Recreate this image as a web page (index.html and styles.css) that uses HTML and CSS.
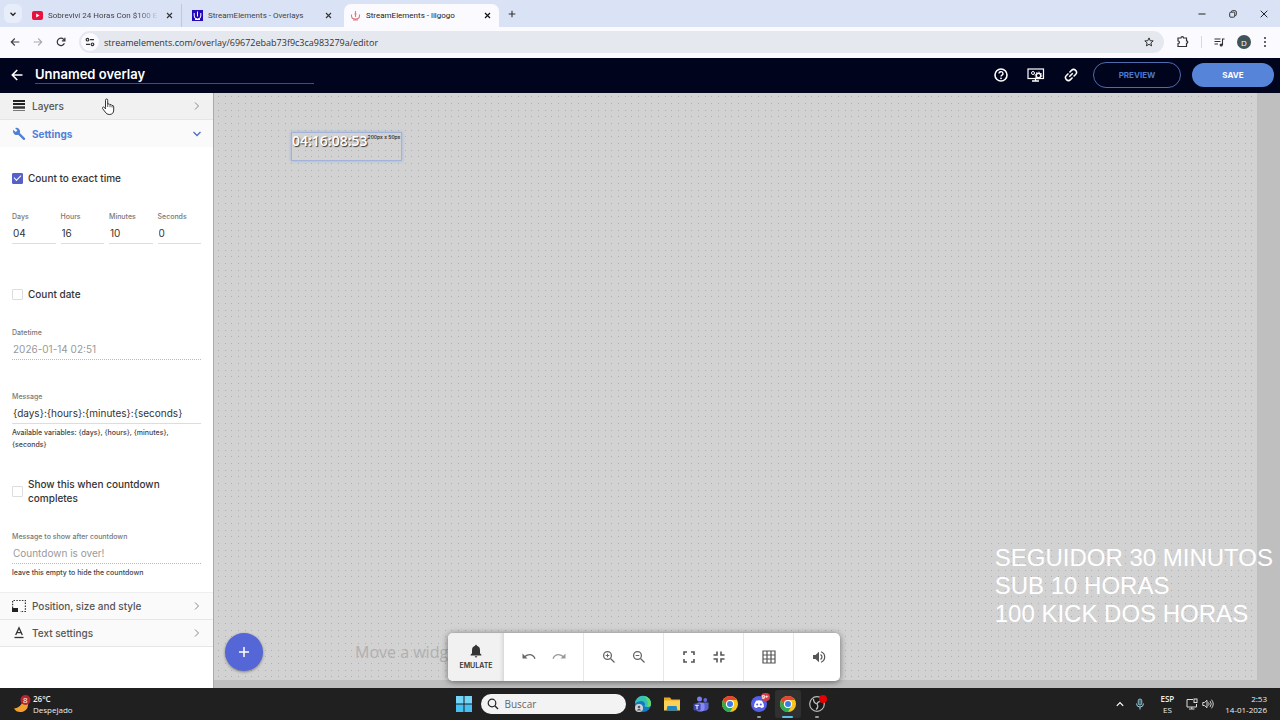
FILE: index.html
```html
<!DOCTYPE html>
<html lang="es">

<head>
	<meta charset="utf-8">
	<title>StreamElements - lilgogo</title>
	<link rel="stylesheet" href="styles.css">
</head>

<body>
	<!-- browser tabs -->
	<div class="tabs">
		<button class="tab-search" aria-label="Search tabs"><svg width="8" height="8" viewBox="0 0 8 8"><path d="M1.500 2.800 4 5.300 6.500 2.800" fill="none" stroke="#222" stroke-width="1.300"/></svg></button>
		<div class="tab">
			<svg width="11" height="11" viewBox="0 0 11 11"><rect y="1" width="11" height="9" rx="2" fill="#e8103c"/><path d="M4.200 3.500v4l3.400-2z" fill="#fff"/></svg>
			<span class="tab-title faded">Sobreviví 24 Horas Con $100 E</span>
			<button class="close" aria-label="Close tab"><svg width="7" height="7" viewBox="0 0 7 7"><path d="M1 1l5 5M6 1 1 6" stroke="#333" stroke-width="1.100"/></svg></button>
		</div>
		<div class="tab divided">
			<svg width="11" height="11" viewBox="0 0 11 11"><rect width="11" height="11" fill="#2409b8"/><path d="M2.200 3v3a3.300 3 0 0 0 6.600 0V3M5.500 1.500v5M3 9.500h5" fill="none" stroke="#fff"/></svg>
			<span class="tab-title">StreamElements - Overlays</span>
			<button class="close" aria-label="Close tab"><svg width="7" height="7" viewBox="0 0 7 7"><path d="M1 1l5 5M6 1 1 6" stroke="#333" stroke-width="1.100"/></svg></button>
		</div>
		<div class="tab active">
			<svg width="11" height="11" viewBox="0 0 11 11"><path d="M1.500 4.500v1.500a4 3 0 0 0 8 0V4.500M5.500 1v6M3 10h5" fill="none" stroke="#e5777d" stroke-width="1.100"/><circle cx="5.500" cy="4" r="1" fill="#e5777d"/></svg>
			<span class="tab-title">StreamElements - lilgogo</span>
			<button class="close" aria-label="Close tab"><svg width="7" height="7" viewBox="0 0 7 7"><path d="M1 1l5 5M6 1 1 6" stroke="#111" stroke-width="1.200"/></svg></button>
		</div>
		<button class="new-tab" aria-label="New tab"><svg width="8" height="8" viewBox="0 0 8 8"><path d="M4 .700v6.600M.700 4h6.600" stroke="#333" stroke-width="1.100"/></svg></button>
		<div class="window-buttons">
			<button aria-label="Minimize"><svg width="8" height="8" viewBox="0 0 8 8"><path d="M.500 4h7" stroke="#222"/></svg></button>
			<button aria-label="Restore"><svg width="8" height="8" viewBox="0 0 8 8"><g fill="none" stroke="#222" stroke-width=".900"><rect x=".700" y="2.200" width="5" height="5" rx="1"/><path d="M2.500 2V1.500A.800.800 0 0 1 3.300.700h2.700A1.300 1.300 0 0 1 7.300 2v2.700a.800.800 0 0 1-.800.800H6"/></g></svg></button>
			<button aria-label="Close"><svg width="8" height="8" viewBox="0 0 8 8"><path d="M.700.700l6.600 6.600M7.300.700.700 7.300" stroke="#222"/></svg></button>
		</div>
	</div>

	<!-- address bar -->
	<div class="toolbar">
		<button aria-label="Back"><svg width="10" height="10" viewBox="0 0 10 10"><path d="M9.300 5H1.300M4.800 1.500 1.300 5l3.500 3.500" fill="none" stroke="#444" stroke-width="1.200"/></svg></button>
		<button aria-label="Forward"><svg width="10" height="10" viewBox="0 0 10 10"><path d="M.700 5h8M5.200 1.500 8.700 5 5.200 8.500" fill="none" stroke="#aaa" stroke-width="1.100"/></svg></button>
		<button aria-label="Reload"><svg width="10" height="10" viewBox="0 0 10 10"><path d="M8.400 6.200A3.700 3.700 0 1 1 7.700 2.400L8.800 3.500M8.900.800v3H5.900" fill="none" stroke="#333" stroke-width="1.200"/></svg></button>
		<div class="address">
			<button class="site-info" aria-label="Site information"><svg width="10" height="10" viewBox="0 0 10 10"><g fill="none" stroke="#333" stroke-width="1.200"><circle cx="2.500" cy="2.700" r="1.300"/><path d="M5 2.700h4M1 7.300h4"/><circle cx="7.500" cy="7.300" r="1.300"/></g></svg></button>
			<input type="text" aria-label="Address" value="streamelements.com/overlay/69672ebab73f9c3ca983279a/editor">
			<button aria-label="Bookmark"><svg width="10" height="10" viewBox="0 0 10 10"><path d="M5 .900 6.200 3.700l3 .200-2.300 2 .700 3L5 7.300 2.400 8.900l.700-3L.800 3.900l3-.200z" fill="none" stroke="#333"/></svg></button>
		</div>
		<div class="extensions">
			<button aria-label="Extensions"><svg width="12" height="12" viewBox="0 0 12 12"><path d="M1 2h3a1.300 1.300 0 0 1 2.600 0H9.500v2.800a1.300 1.300 0 0 1 0 2.600V10.500H1V7.700q1.500-.300 1.500-1.500T1 4.800z" fill="none" stroke="#333" stroke-width="1.200"/></svg></button>
			<span class="bar"></span>
			<button aria-label="Media"><svg width="11" height="11" viewBox="0 0 11 11"><path d="M.500 2h6M.500 4.500h6M.500 7H4M8.500 8V2H10.500" fill="none" stroke="#333" stroke-width="1.100"/><circle cx="7.200" cy="8" r="1.600" fill="#333"/></svg></button>
			<button class="avatar">D</button>
			<button aria-label="Menu"><svg width="4" height="12" viewBox="0 0 4 12"><g fill="#333"><circle cx="2" cy="2" r="1"/><circle cx="2" cy="6" r="1"/><circle cx="2" cy="10" r="1"/></g></svg></button>
		</div>
	</div>

	<!-- editor header -->
	<header class="header">
		<a href="#" aria-label="Back"><svg width="12" height="12" viewBox="0 0 12 12"><path d="M11.500 6H1.500M6.200 1 1.300 6l4.900 5" fill="none" stroke="#fff" stroke-width="1.600"/></svg></a>
		<input class="overlay-name" type="text" aria-label="Overlay name" value="Unnamed overlay">
		<div class="header-actions">
			<button aria-label="Help"><svg width="14" height="14" viewBox="0 0 14 14"><circle cx="7" cy="7" r="6" fill="none" stroke="#fff" stroke-width="1.600"/><path d="M5 5.600a2 1.900 0 1 1 3 1.600Q7 7.800 7 8.600" fill="none" stroke="#fff" stroke-width="1.400"/><circle cx="7" cy="10.300" r=".900" fill="#fff"/></svg></button>
			<button aria-label="Overlay settings"><svg width="18" height="14" viewBox="0 0 18 14"><rect x="1" y="1" width="15.500" height="9.500" fill="none" stroke="#fff" stroke-width="1.200"/><path d="M5 13h7M8.500 11v2" stroke="#fff" stroke-width="1.300"/><circle cx="6" cy="5" r="1.500" fill="none" stroke="#fff"/><circle cx="11.500" cy="7.500" r="2.300" fill="none" stroke="#fff" stroke-width="1.500"/><circle cx="11.500" cy="7.500" r="3.400" fill="none" stroke="#fff" stroke-dasharray="1.300 1.300"/></svg></button>
			<button aria-label="Copy link"><svg width="14" height="14" viewBox="0 0 14 14"><g fill="none" stroke="#fff" stroke-width="1.500" transform="rotate(-45 7 7)"><path d="M6.300 9.900H3.400a2.900 2.900 0 0 1 0-5.800H6.300M7.700 4.100h2.900a2.900 2.900 0 0 1 0 5.800H7.700M4.500 7h5"/></g></svg></button>
			<button class="pill preview">PREVIEW</button>
			<button class="pill save">SAVE</button>
		</div>
	</header>

	<main class="editor">
		<aside class="sidebar">
			<button class="section hover">
				<svg width="14" height="14" viewBox="0 0 14 14"><path d="M1 2h12M1 5h12" stroke="#222" stroke-width="2"/><path d="M1 8.500h12" stroke="#333" stroke-width="2.500"/><path d="M1 11.500h12" stroke="#777"/></svg>
				<span>Layers</span>
				<svg class="chevron" width="8" height="8" viewBox="0 0 8 8"><path d="M2 .500 5.500 4 2 7.500" fill="none" stroke="#888"/></svg>
			</button>
			<button class="section open">
				<svg width="14" height="14" viewBox="0 0 14 14"><path d="M12.900 11.100 7.900 6.100A3.900 3.900 0 0 0 3 1L5.400 3.400 3.700 5.100 1.200 2.800A3.900 3.900 0 0 0 6.200 7.800L11.200 12.800Q12 13.500 13 12.500 13.500 11.800 12.900 11.100z" fill="#5180d8"/></svg>
				<span>Settings</span>
				<svg class="chevron" width="8" height="8" viewBox="0 0 8 8"><path d="M.500 2 4 5.500 7.500 2" fill="none" stroke="#4a6fc8" stroke-width="1.300"/></svg>
			</button>
			<form class="settings">
				<label class="check"><input type="checkbox" checked><span>Count to exact time</span></label>
				<div class="time-row">
					<div class="field">
						<label for="days">Days</label>
						<input type="text" id="days" value="04">
					</div>
					<div class="field">
						<label for="hours">Hours</label>
						<input type="text" id="hours" value="16">
					</div>
					<div class="field">
						<label for="minutes">Minutes</label>
						<input type="text" id="minutes" value="10">
					</div>
					<div class="field">
						<label for="seconds">Seconds</label>
						<input type="text" id="seconds" value="0">
					</div>
				</div>
				<label class="check"><input type="checkbox"><span>Count date</span></label>
				<div class="field">
					<label for="datetime">Datetime</label>
					<input type="text" id="datetime" value="2026-01-14 02:51" disabled>
				</div>
				<div class="field with-help">
					<label for="message">Message</label>
					<input type="text" id="message" value="{days}:{hours}:{minutes}:{seconds}">
					<p>Available variables: {days}, {hours}, {minutes}, {seconds}</p>
				</div>
				<label class="check"><input type="checkbox"><span>Show this when countdown completes</span></label>
				<div class="field">
					<label for="after">Message to show after countdown</label>
					<input type="text" id="after" value="Countdown is over!" disabled>
					<p>leave this empty to hide the countdown</p>
				</div>
			</form>
			<button class="section">
				<svg width="14" height="14" viewBox="0 0 14 14"><path d="M.600 9V1.500H13.400V12.500H8" fill="none" stroke="#333" stroke-width="1.200" stroke-dasharray="1.500 1.300"/><rect y="9" width="6" height="4" fill="#222"/></svg>
				<span>Position, size and style</span>
				<svg class="chevron" width="8" height="8" viewBox="0 0 8 8"><path d="M2 .500 5.500 4 2 7.500" fill="none" stroke="#888"/></svg>
			</button>
			<button class="section">
				<svg width="14" height="14" viewBox="0 0 14 14"><path d="M3.700 9 7 1.800 10.300 9M4.800 6.700h4.400" fill="none" stroke="#333" stroke-width="1.300"/><path d="M2.500 11.500h9" stroke="#333" stroke-width="1.300"/></svg>
				<span>Text settings</span>
				<svg class="chevron" width="8" height="8" viewBox="0 0 8 8"><path d="M2 .500 5.500 4 2 7.500" fill="none" stroke="#888"/></svg>
			</button>
		</aside>

		<section class="stage">
			<svg class="dots" width="100%" height="100%" aria-hidden="true">
				<defs>
					<pattern id="grid" width="20" height="20" patternUnits="userSpaceOnUse">
						<path d="M4 3.500h1M11 3.500h1M17 3.500h1M4 10.500h1M11 10.500h1M17 10.500h1M4 17.500h1M11 17.500h1M17 17.500h1" stroke="#aeaeb1"/>
					</pattern>
				</defs>
				<rect width="100%" height="100%" fill="url(#grid)"/>
			</svg>
			<div class="widget"><span class="count">04:16:08:53</span><span class="size">200px x 50px</span></div>
			<p class="hint">Move a widget</p>
			<p class="goals">SEGUIDOR 30 MINUTOS<br>SUB 10 HORAS<br>100 KICK DOS HORAS</p>
			<button class="add" aria-label="Add widget"><svg width="12" height="12" viewBox="0 0 12 12"><path d="M6 1v10M1 6h10" stroke="#fff" stroke-width="1.500"/></svg></button>
			<div class="controls">
				<button class="emulate">
					<svg width="14" height="14" viewBox="0 0 14 14"><path d="M7 .800q.900 0 .900 1Q11 2.800 11 6.200V9.300l1.400 1.500v.700H1.600v-.700L3 9.300V6.200Q3 2.800 6.100 1.800 6.100.800 7 .800zM5.700 12.200h2.600Q8 13.600 7 13.600T5.700 12.200z" fill="#333"/></svg>
					<span>EMULATE</span>
				</button>
				<div class="group">
					<button aria-label="Undo"><svg width="14" height="14" viewBox="0 0 14 14"><path d="M.500 3.500v5h5L3.700 6.700Q5.500 5.200 7.500 5.200 11 5.200 12.300 8.900L13.600 8.400Q12 3.900 7.500 3.900 4.900 3.900 2.700 5.700z" fill="#666"/></svg></button>
					<button aria-label="Redo"><svg width="14" height="14" viewBox="0 0 14 14"><path d="M13.500 3.500v5h-5l1.800-1.800Q8.500 5.200 6.500 5.200 3 5.200 1.700 8.900L.400 8.400Q2 3.900 6.500 3.900q2.600 0 4.800 1.800z" fill="#999"/></svg></button>
				</div>
				<div class="group">
					<button aria-label="Zoom in"><svg width="14" height="14" viewBox="0 0 14 14"><g fill="none" stroke="#666" stroke-width="1.300"><circle cx="5.500" cy="5.500" r="3.900"/><path d="M8.500 8.500l4 4"/><path d="M5.500 3.700v3.600M3.700 5.500h3.600" stroke-width="1"/></g></svg></button>
					<button aria-label="Zoom out"><svg width="14" height="14" viewBox="0 0 14 14"><g fill="none" stroke="#666" stroke-width="1.300"><circle cx="5.500" cy="5.500" r="3.900"/><path d="M8.500 8.500l4 4"/><path d="M3.700 5.500h3.600" stroke-width="1"/></g></svg></button>
				</div>
				<div class="group">
					<button aria-label="Fullscreen"><svg width="14" height="14" viewBox="0 0 14 14"><path d="M2 5V2h3M9 2h3v3M12 9v3H9M5 12H2V9" fill="none" stroke="#555" stroke-width="1.600"/></svg></button>
					<button aria-label="Exit fullscreen"><svg width="14" height="14" viewBox="0 0 14 14"><path d="M5 1.500V5H1.500M9 1.500V5h3.500M12.500 9H9v3.500M5 12.500V9H1.500" fill="none" stroke="#555" stroke-width="1.600"/></svg></button>
				</div>
				<div class="group">
					<button aria-label="Grid"><svg width="14" height="14" viewBox="0 0 14 14"><path d="M1 1h12v12H1zM5 1v12M9 1v12M1 5h12M1 9h12" fill="none" stroke="#555" stroke-width="1.200"/></svg></button>
				</div>
				<div class="group">
					<button aria-label="Sound"><svg width="14" height="14" viewBox="0 0 14 14"><path d="M1 5h2.500L7 1.800v10.400L3.500 9H1z" fill="#555"/><path d="M8.500 4.500Q10 5.500 10 7T8.500 9.500M9 1.800Q12.700 3.200 12.700 7T9 12.200" fill="none" stroke="#555" stroke-width="1.200"/></svg></button>
				</div>
			</div>
		</section>
	</main>

	<footer class="taskbar">
		<div class="weather">
			<svg width="18" height="20" viewBox="0 0 18 20"><path d="M1 14.500Q8 14 10 6l5 2q1 7-4.500 9.500Q4 19.500 1 14.500z" fill="#f2a032"/><circle cx="12.500" cy="6" r="5" fill="#b7262c"/><text x="10" y="9" class="badge-text">8</text></svg>
			<div><b>26°C</b><br>Despejado</div>
		</div>
		<div class="apps">
			<button aria-label="Start"><svg width="16" height="16" viewBox="0 0 16 16"><g fill="#45c0f2"><path d="M0 0h7.500v7.500H0zM8.500 0H16v7.500H8.500z" fill="#74d5f8"/><path d="M0 8.500h7.500V16H0zM8.500 8.500H16V16H8.500z"/></g></svg></button>
			<label class="search">
				<svg width="12" height="12" viewBox="0 0 12 12"><circle cx="5" cy="5" r="3.800" fill="none" stroke="#222" stroke-width="1.200"/><path d="M7.800 7.800l3.200 3.200" stroke="#222" stroke-width="1.300"/></svg>
				<input type="text" placeholder="Buscar" aria-label="Buscar">
			</label>
			<button aria-label="Edge"><svg width="18" height="18" viewBox="0 0 18 18"><circle cx="9" cy="9" r="8" fill="#1479c4"/><path d="M1 8.500A8 8 0 0 1 17 9q0 3-3.500 3-3 0-3-1.500.5-.5.5-1.500Q10.500 6 7 6 3 6 1 8.500z" fill="#36c3b4"/><path d="M10 1q7 1.500 7 8 0 3-3.500 3Q15 5 10 1z" fill="#67d868"/><circle cx="5" cy="13" r="4" fill="#cfd3d4"/><circle cx="5" cy="12" r="1.300" fill="#555"/><path d="M2.700 15.500q2.300-3.500 4.600 0" fill="#555"/></svg></button>
			<button aria-label="Files"><svg width="18" height="18" viewBox="0 0 18 18"><path d="M1 2.500h6l1.500 2H17V15H1z" fill="#e9a923"/><path d="M1 5.500h16v10H1z" fill="#fbd058"/><path d="M4.500 11h9l1 4.500h-11z" fill="#1d86c8"/></svg></button>
			<button aria-label="Teams"><svg width="18" height="18" viewBox="0 0 18 18"><circle cx="7.500" cy="4" r="2.500" fill="#7a80eb"/><circle cx="13.300" cy="5" r="1.900" fill="#626adb"/><path d="M11 7.500h5.500v5.500q-1 3-4.500 3z" fill="#5c60d1"/><rect x="4" y="7.500" width="8.500" height="9" rx="3" fill="#858af2"/><rect x="1.500" y="8.500" width="7" height="7" rx="1" fill="#4145ae"/><path d="M3.200 10.300h3.600M5 10.300v4" stroke="#fff"/></svg></button>
			<button aria-label="Chrome"><svg width="18" height="18" viewBox="0 0 18 18"><circle cx="9" cy="9" r="8" fill="#fbc31d"/><path d="M2.100 5A8 8 0 0 1 15.900 5H9A4 4 0 0 0 5.500 11z" fill="#e54335"/><path d="M2.100 5A8 8 0 0 0 9 17l3.500-6A4 4 0 0 1 5.500 11z" fill="#31a852"/><circle cx="9" cy="9" r="4" fill="#fff"/><circle cx="9" cy="9" r="3" fill="#3a7de8"/></svg></button>
			<button class="running" aria-label="Discord"><svg width="18" height="18" viewBox="0 0 18 18"><circle cx="9" cy="9" r="8" fill="#555fe6"/><path d="M6 5.800Q9 4.800 12 5.800q2 3 2 6-1.500 1.300-3 1.300l-.700-1.200H7.700L7 13.100q-1.500 0-3-1.300 0-3 2-6z" fill="#fff"/><circle cx="7.200" cy="9.500" r="1" fill="#555fe6"/><circle cx="10.800" cy="9.500" r="1" fill="#555fe6"/></svg><span class="badge">9+</span></button>
			<button class="running current" aria-label="Chrome"><svg width="18" height="18" viewBox="0 0 18 18"><circle cx="9" cy="9" r="8" fill="#fbc31d"/><path d="M2.100 5A8 8 0 0 1 15.900 5H9A4 4 0 0 0 5.500 11z" fill="#e54335"/><path d="M2.100 5A8 8 0 0 0 9 17l3.500-6A4 4 0 0 1 5.500 11z" fill="#31a852"/><circle cx="9" cy="9" r="4" fill="#fff"/><circle cx="9" cy="9" r="3" fill="#3a7de8"/></svg></button>
			<button class="running" aria-label="OBS"><svg width="18" height="18" viewBox="0 0 18 18" overflow="visible"><circle cx="9" cy="9" r="7.300" fill="#181818" stroke="#bbb" stroke-width="1.200"/><g fill="none" stroke="#bbb" stroke-width="1.300"><path d="M5.500 4q0 4 3.500 5M13.800 6.500q-4-.500-4.800 2.500M8 14.500q3-2.500 1-5.500"/></g><circle cx="15" cy="4" r="4" fill="#e40000"/></svg></button>
		</div>
		<div class="tray">
			<button aria-label="Hidden icons"><svg width="8" height="8" viewBox="0 0 8 8"><path d="M.800 5.800 4 2.500l3.200 3.300" fill="none" stroke="#fff" stroke-width="1.200"/></svg></button>
			<svg width="10" height="12" viewBox="0 0 10 12"><rect x="3.200" y="1" width="3.600" height="6" rx="1.800" fill="#3f6b78" stroke="#9fd3dd" stroke-width=".800"/><path d="M1.500 5.500a3.500 3.500 0 0 0 7 0M5 9v2.500" fill="none" stroke="#9fd3dd"/></svg>
			<div class="lang"><b>ESP</b><br>ES</div>
			<div class="system">
				<svg width="12" height="12" viewBox="0 0 12 12"><path d="M7 1.500H1v7.500h9.500V6M3 11h5.500M5.800 9v2" fill="none" stroke="#ddd"/><rect x="8" y="1" width="3" height="3.500" fill="none" stroke="#ddd"/></svg>
				<svg width="12" height="12" viewBox="0 0 12 12"><path d="M.800 4.500H2.500L5 2.300v7.400L2.500 7.500H.800z" fill="none" stroke="#ddd"/><path d="M6.500 4.500q1.300 1.500 0 3M8 3q2.500 3 0 6M9.500 1.700q3.500 4.300 0 8.600" fill="none" stroke="#ddd" stroke-width=".900"/></svg>
			</div>
			<div class="clock">2:53<br>14-01-2026</div>
		</div>
	</footer>

	<svg class="pointer" width="14" height="18" viewBox="0 0 14 18"><path d="M4.500 9.500V2.300q0-1.300 1.100-1.300T6.700 2.300V6q2-.500 2.300.700 1.700-.400 2 .800 1.700-.200 1.700 1.300V12q0 4.500-4.500 4.500-2.700 0-4-2.500L1.500 10.500Q1.300 9 2.500 9T4.500 11z" fill="#fff" stroke="#333"/><path d="M6.700 6v3M9 6.700v2.500M11 7.500v2" stroke="#333" stroke-width=".800"/></svg>
</body>

</html>
```

FILE: styles.css
```css
* {
	box-sizing: border-box;
}

body {
	margin: 0;
	min-height: 100vh;
	display: flex;
	flex-direction: column;
	font-family: Inter, "Liberation Sans", sans-serif;
	font-size: 10px;
	color: #333;
}

button {
	display: flex;
	align-items: center;
	justify-content: center;
	padding: 0;
	border: none;
	background: none;
	color: inherit;
	font: inherit;
	cursor: pointer;
}

input {
	min-width: 0;
	padding: 0;
	border: none;
	background: none;
	color: inherit;
	font: inherit;
	outline: none;
}

svg {
	display: block;
	flex: none;
}

p {
	margin: 0;
}

/* browser */

.tabs {
	display: flex;
	align-items: center;
	height: 27px;
	padding-left: 4px;
	background: #dae2f5;
	font-family: Roboto, "Open Sans", sans-serif;
	font-size: 8px;
	color: #444;
}

.tab-search {
	width: 18px;
	height: 19px;
	border-radius: 6px;
	background: #e8edfa;
}

.tab {
	display: flex;
	align-items: center;
	gap: 5px;
	width: 159px;
	height: 23px;
	padding: 0 7px 0 10px;
	align-self: flex-end;
}

.tab-title {
	flex: 1;
	white-space: nowrap;
}

.faded {
	-webkit-mask-image: linear-gradient(to right, #000 80%, transparent);
	mask-image: linear-gradient(to right, #000 80%, transparent);
}

.divided {
	border-left: 1px solid #b9c8ea;
}

.tab.active {
	width: 155px;
	margin-left: 4px;
	padding-left: 6px;
	border-radius: 7px 7px 0 0;
	background: #fafaff;
	color: #222;
}

.close {
	width: 9px;
	height: 9px;
}

.new-tab {
	margin-left: 9px;
}

.window-buttons {
	display: flex;
	gap: 23px;
	margin-left: auto;
	padding-right: 12px;
}

.toolbar {
	display: flex;
	align-items: center;
	gap: 13px;
	height: 31px;
	padding: 0 13px 1px 10px;
	background: #fafaff;
	font-family: "Open Sans", sans-serif;
	font-size: 9px;
}

.address {
	flex: 1;
	display: flex;
	align-items: center;
	gap: 5px;
	height: 22px;
	padding: 0 10px 0 2px;
	border-radius: 11px;
	background: #e6e8f0;
}

.address input {
	flex: 1;
}

.site-info {
	width: 18px;
	height: 18px;
	border-radius: 50%;
	background: #fafaff;
}

.extensions {
	display: flex;
	align-items: center;
	gap: 12px;
}

.bar {
	width: 1px;
	height: 12px;
	background: #d5d9e6;
}

.avatar {
	width: 14px;
	height: 14px;
	border-radius: 50%;
	background: #3f5359;
	color: #fff;
	font-size: 8px;
}

/* editor header */

.header {
	display: flex;
	align-items: center;
	gap: 12px;
	height: 35px;
	padding: 0 6px 1px 11px;
	background: #00041c;
	color: #fff;
}

.overlay-name {
	align-self: flex-start;
	width: 279px;
	height: 26px;
	padding-top: 6px;
	border-bottom: 1px solid #4b4e60;
	font-size: 13px;
	font-weight: 600;
}

.header-actions {
	display: flex;
	align-items: center;
	gap: 19px;
	margin-left: auto;
}

.pill {
	width: 88px;
	height: 26px;
	border-radius: 13px;
	font-size: 8px;
	font-weight: 700;
}

.preview {
	margin-left: -4px;
	border: 1px solid #4f6cad;
	color: #4b78cf;
}

.save {
	width: 82px;
	height: 24px;
	margin-left: -8px;
	background: #5684d9;
}

/* sidebar */

.editor {
	flex: 1;
	display: flex;
}

.sidebar {
	width: 214px;
	border-right: 1px solid #aaa;
	background: #fff;
}

.section {
	width: 100%;
	height: 27px;
	gap: 6px;
	padding: 0 12px;
	border-bottom: 1px solid #e6e6e6;
	background: #fafafa;
	color: #555;
	font-size: 10px;
	font-weight: 500;
	text-align: left;
}

.section span {
	flex: 1;
}

.section.hover {
	background: #f1f1f1;
}

.section.open {
	border-bottom: none;
	color: #5180d8;
	font-weight: 700;
}

.settings {
	padding: 24px 12px 13px;
	border-bottom: 1px solid #eee;
}

.check {
	display: flex;
	align-items: center;
	gap: 5px;
	margin-bottom: 26px;
	font-size: 10px;
	font-weight: 500;
	line-height: 14px;
}

.check input {
	flex: none;
	appearance: none;
	display: grid;
	place-items: center;
	width: 11px;
	height: 11px;
	margin: 0;
	border: 1px solid #ddd;
	border-radius: 1px;
}

.check input:checked {
	border-color: #5561c9;
	background: #5561c9;
}

.check input:checked::before {
	content: "";
	width: 6px;
	height: 3px;
	margin-bottom: 2px;
	border: solid #fff;
	border-width: 0 0 1px 1px;
	transform: rotate(-45deg);
}

.time-row {
	display: grid;
	grid-template-columns: repeat(4, 1fr);
	gap: 5px;
	margin-bottom: 43px;
}

.field label {
	display: block;
	color: #777;
	font-size: 7px;
	font-weight: 500;
	line-height: 12px;
}

.field input {
	display: block;
	width: 100%;
	height: 21px;
	padding-left: 1px;
	border-bottom: 1px solid #ddd;
	font-size: 10px;
}

.field input:disabled {
	border-bottom: 1px dotted #bbb;
	color: #999;
}

.field p {
	margin-top: 3px;
	color: #444;
	font-size: 7px;
	font-weight: 500;
	line-height: 12px;
}

.settings > .field {
	margin-bottom: 31px;
}

.settings > .with-help {
	margin-bottom: 26px;
}

.settings > .field:last-child {
	margin-bottom: 0;
}

/* canvas */

.stage {
	position: relative;
	flex: 1;
	border: solid #bfbfbf;
	border-width: 0 23px 8px 0;
	background: #d2d2d2;
}

.dots {
	position: absolute;
	inset: 0;
}

.widget {
	position: absolute;
	left: 77px;
	top: 39px;
	display: flex;
	width: 111px;
	height: 29px;
	border: 1px solid #a3b2d8;
	box-shadow: 0 0 3px #9db0dc;
	white-space: nowrap;
}

.count {
	color: #fff;
	font-family: "Open Sans", sans-serif;
	font-size: 14px;
	font-weight: 600;
	line-height: 16px;
	text-shadow: 1px 1px 1px #333;
}

.size {
	color: #222;
	font-size: 5px;
	font-weight: 500;
	line-height: 8px;
}

.hint {
	position: absolute;
	left: 141px;
	bottom: 17px;
	color: #b0b0b0;
	font-family: "Open Sans", sans-serif;
	font-size: 16px;
	line-height: 22px;
}

.goals {
	position: absolute;
	right: -16px;
	bottom: 52px;
	color: #fff;
	font-family: "Liberation Sans", Arial, sans-serif;
	font-size: 24px;
	line-height: 28px;
	white-space: nowrap;
}

.add {
	position: absolute;
	left: 11px;
	bottom: 9px;
	width: 38px;
	height: 38px;
	border-radius: 50%;
	background: #5566d6;
	box-shadow: 0 1px 3px rgba(0, 0, 0, 0.4);
}

.controls {
	position: absolute;
	left: 234px;
	bottom: -1px;
	display: flex;
	height: 48px;
	border-radius: 5px;
	background: #fff;
	box-shadow: 0 1px 6px rgba(0, 0, 0, 0.5);
}

.emulate {
	flex-direction: column;
	gap: 3px;
	width: 56px;
	border-radius: 5px 0 0 5px;
	background: #f1f1f1;
	box-shadow: inset -4px 0 4px -3px #ccc;
	font-size: 7px;
	font-weight: 600;
}

.group {
	display: flex;
	align-items: center;
	gap: 16px;
	padding: 0 17px 0 18px;
	border-right: 1px solid #e6e6e6;
}

.group:last-child {
	padding-right: 14px;
	border-right: none;
}

/* taskbar */

.taskbar {
	display: grid;
	grid-template-columns: 1fr auto 1fr;
	align-items: center;
	height: 32px;
	padding: 0 13px;
	background: #202020;
	color: #eee;
	font-family: "Open Sans", sans-serif;
	font-size: 8px;
	line-height: 11px;
}

.taskbar b {
	font-weight: 600;
}

.weather {
	display: flex;
	align-items: center;
	gap: 2px;
}

.badge-text {
	fill: #fff;
	font-size: 8px;
}

.apps {
	display: flex;
	align-items: center;
	gap: 3px;
}

.apps button {
	position: relative;
	width: 26px;
	height: 28px;
	border-radius: 3px;
}

.search {
	display: flex;
	align-items: center;
	gap: 6px;
	width: 145px;
	height: 20px;
	margin: 0 1px;
	padding: 0 6px;
	border-radius: 10px;
	background: #f3f3f3;
	color: #555;
	font-size: 10px;
}

.search input::placeholder {
	color: #666;
}

.apps .current {
	background: #303030;
}

.running::after {
	content: "";
	position: absolute;
	bottom: 0;
	width: 4px;
	height: 2px;
	border-radius: 1px;
	background: #999;
}

.current::after {
	width: 11px;
	background: #5cc0ea;
}

.badge {
	position: absolute;
	top: 3px;
	right: 2px;
	padding: 0 1px;
	border-radius: 4px;
	background: #d83c4c;
	color: #fff;
	font-size: 6px;
	font-weight: 700;
	line-height: 8px;
}

.tray {
	display: flex;
	align-items: center;
	justify-content: flex-end;
	gap: 11px;
}

.lang {
	margin: 0 1px 0 4px;
	text-align: center;
}

.system {
	display: flex;
	gap: 4px;
}

.clock {
	text-align: right;
}

.pointer {
	position: absolute;
	left: 101px;
	top: 98px;
}
```
